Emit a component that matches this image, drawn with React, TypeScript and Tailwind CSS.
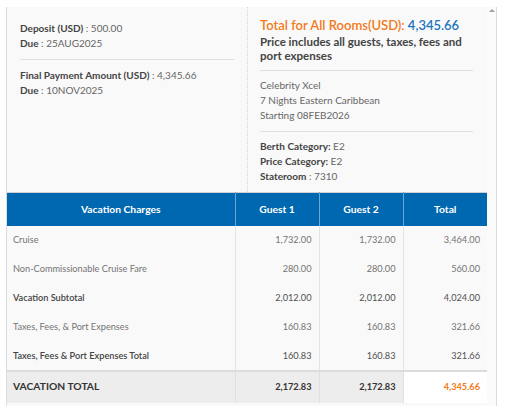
const rows = [
  { label: "Cruise", g1: "1,732.00", g2: "1,732.00", total: "3,464.00", bold: false },
  { label: "Non-Commissionable Cruise Fare", g1: "280.00", g2: "280.00", total: "560.00", bold: false },
  { label: "Vacation Subtotal", g1: "2,012.00", g2: "2,012.00", total: "4,024.00", bold: true },
  { label: "Taxes, Fees, & Port Expenses", g1: "160.83", g2: "160.83", total: "321.66", bold: false },
  { label: "Taxes, Fees & Port Expenses Total", g1: "160.83", g2: "160.83", total: "321.66", bold: true },
];

const Line = ({ label, value }: { label: string; value: string }) => (
  <p className="leading-[15px]">
    <span className="font-bold text-[#444]">{label}</span>
    <span className="text-[#666]"> : {value}</span>
  </p>
);

export default function App() {
  return (
    <div
      className="h-[406px] w-[509px] overflow-hidden bg-white text-[10px]"
      style={{ fontFamily: "Lato, 'Open Sans', sans-serif" }}
    >
      <div className="mt-[7px] flex h-[399px]">
        <div className="w-[7px] shrink-0 border-r border-[#dcdcdc] bg-white" />
        <div className="flex w-[490px] shrink-0 bg-[#f9f9f9]">
          {/* main content */}
          <div className="flex w-[480px] flex-col">
            <div className="flex h-[185px]">
              {/* left column */}
              <div className="w-[241px] border-r border-dotted border-[#d4d4d4] pl-[13px] pr-[13px] pt-[14px]">
                <Line label="Deposit (USD)" value="500.00" />
                <Line label="Due" value="25AUG2025" />
                <div className="my-[8px] border-t border-[#dedede]" />
                <Line label="Final Payment Amount (USD)" value="4,345.66" />
                <Line label="Due" value="10NOV2025" />
              </div>
              {/* right column */}
              <div className="flex-1 pl-[12px] pr-[14px] pt-[9px]">
                <p className="whitespace-nowrap text-[13px] font-semibold leading-[18px] text-[#f47a20]">
                  Total for All Rooms(USD): <span className="text-[#1b75bc]">4,345.66</span>
                </p>
                <p className="mt-[1px] text-[11.5px] font-bold leading-[14px] text-[#444]">
                  Price includes all guests, taxes, fees and port expenses
                </p>
                <div className="mb-[7px] mt-[7px] border-t border-[#dedede]" />
                <div className="text-[#666]">
                  <p className="leading-[15px]">Celebrity Xcel</p>
                  <p className="leading-[15px]">7 Nights Eastern Caribbean</p>
                  <p className="leading-[15px]">Starting 08FEB2026</p>
                </div>
                <div className="mb-[7px] mt-[8px] border-t border-[#dedede]" />
                <p className="leading-[15px]">
                  <span className="font-bold text-[#444]">Berth Category:</span>
                  <span className="text-[#666]"> E2</span>
                </p>
                <p className="leading-[15px]">
                  <span className="font-bold text-[#444]">Price Category:</span>
                  <span className="text-[#666]"> E2</span>
                </p>
                <Line label="Stateroom" value="7310" />
              </div>
            </div>

            {/* table */}
            <table className="w-[480px] table-fixed border-collapse text-[9.2px]">
              <colgroup>
                <col className="w-[228px]" />
                <col className="w-[84px]" />
                <col className="w-[84px]" />
                <col className="w-[84px]" />
              </colgroup>
              <thead>
                <tr className="h-[33px] border-t border-[#cfcfcf] bg-[#0068b0] text-[10.3px] font-bold text-white">
                  <th className="border-r border-[#6fa6d4] font-bold">Vacation Charges</th>
                  <th className="border-r border-[#6fa6d4] font-bold">Guest 1</th>
                  <th className="border-r border-[#6fa6d4] font-bold">Guest 2</th>
                  <th className="font-bold">Total</th>
                </tr>
              </thead>
              <tbody>
                {rows.map((r) => (
                  <tr key={r.label} className={`h-[29px] ${r.bold ? "text-[#505050]" : "text-[#747474]"}`}>
                    <td className={`border-r border-[#e4e4e4] pl-[6px] ${r.bold ? "font-semibold text-[#444]" : ""}`}>
                      {r.label}
                    </td>
                    <td className="border-r border-[#e4e4e4] pr-[7px] text-right">{r.g1}</td>
                    <td className="border-r border-[#e4e4e4] pr-[7px] text-right">{r.g2}</td>
                    <td className="pr-[7px] text-right">{r.total}</td>
                  </tr>
                ))}
                <tr className="h-[32px] border-t-2 border-[#dcdcdc] bg-[#ededed] text-[#333]">
                  <td className="border-r border-[#e0e0e0] pl-[6px] text-[10.3px] font-bold">VACATION TOTAL</td>
                  <td className="border-r border-[#e0e0e0] pr-[7px] text-right font-bold">2,172.83</td>
                  <td className="border-r border-[#e0e0e0] pr-[7px] text-right font-bold">2,172.83</td>
                  <td className="bg-white pr-[7px] text-right font-bold text-[#f47a20]">4,345.66</td>
                </tr>
              </tbody>
            </table>
          </div>
          {/* scrollbar */}
          <div className="relative w-[10px] border-r border-[#dcdcdc] bg-[#fbfbfb]">
            <div className="absolute left-[2px] top-[2px] h-0 w-0 border-x-[3px] border-b-[3px] border-x-transparent border-b-[#a0a0a0]" />
          </div>
        </div>
      </div>
    </div>
  );
}
